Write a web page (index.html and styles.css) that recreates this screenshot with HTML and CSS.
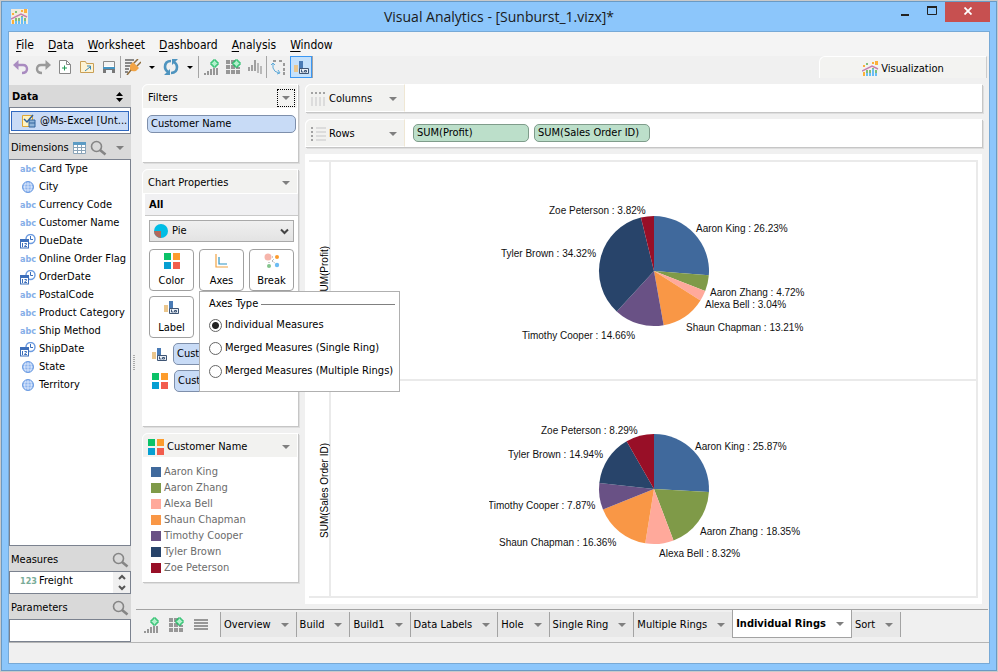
FILE: index.html
```html
<!DOCTYPE html>
<html lang="en">
  <head>
    <meta charset="utf-8">
    <title>Visual Analytics</title>
    <link rel="stylesheet" href="styles.css">
  </head>
  <body>
    <!-- shared icons -->
    <svg class="sprite" aria-hidden="true">
      <symbol id="caret" viewBox="0 0 8 4"><path d="M0 0h8L4 4z" fill="currentColor"/></symbol>
      <symbol id="viz" viewBox="0 0 17 15">
        <path d="M1 4h2v2H1zM10 1h2v2h-2zM13 0h3v4h-3zM1 11h2v4H1z" fill="#fbb03b"/>
        <path d="M4 2h2v2H4zM4 9h2v3H4zM7 9h2v3H7zM10 7h2v2h-2zM13 9h2v3h-2z" fill="#7fbf7b"/>
        <path d="M4 12h2v3H4zM7 12h2v3H7zM10 8h2v7h-2zM13 12h2v3h-2z" fill="#69bdf5"/>
        <path d="M0 10 10 5l6 3" fill="none" stroke="#c77fae" stroke-width="1.4"/>
      </symbol>
      <symbol id="palette" viewBox="0 0 16 16">
        <path d="M0 0h7v7H0z" fill="#0bc268"/><path d="M9 0h7v7H9z" fill="#fd9c2d"/>
        <path d="M0 9h7v7H0z" fill="#069fd2"/><path d="M9 9h7v7H9z" fill="#f25d4e"/>
      </symbol>
      <symbol id="label" viewBox="0 0 15 15">
        <path d="M0 5h4v7H0z" fill="#ebc68c"/><path d="M5 1h4v8H5z" fill="#4a7bb5"/>
        <path d="M5.5 8.5h9v5h-9z" fill="#e8eef6" stroke="#3e5574"/>
        <path d="M7.500 9.500v2.500h2M10.500 10.500h2v1.500h-2z" fill="none" stroke="#3e5574"/>
      </symbol>
      <symbol id="globe" viewBox="0 0 12 12">
        <circle cx="6" cy="6" r="5.500" fill="#8db4ee"/>
        <path d="M6 0v12M0 6h12M1 3h10M1 9h10M3.500 1q-2 5 0 10M8.500 1q2 5 0 10" fill="none" stroke="#e4eefc" stroke-width=".8"/>
        <circle cx="6" cy="6" r="5.500" fill="none" stroke="#6a9ae0"/>
      </symbol>
      <symbol id="date" viewBox="0 0 16 15">
        <circle cx="10.500" cy="5" r="4.500" fill="#fff" stroke="#6c9be0" stroke-width="1.400"/>
        <path d="M10.500 2v3.500h2.500" fill="none" stroke="#3a6db8"/>
        <path d="M0 5h9v9.500H0z" fill="#3d6fbb"/><path d="M1 8h7v5.500H1z" fill="#fff"/>
        <path d="M2.500 9v4M4.500 9.500h2v1l-2 1.500v.5h2.500" fill="none" stroke="#3d6fbb"/>
      </symbol>
      <symbol id="search" viewBox="0 0 17 16">
        <circle cx="6.500" cy="6.500" r="5" fill="none" stroke="#858585" stroke-width="1.600"/>
        <path d="M10 10l5.500 4.500" stroke="#858585" stroke-width="2.600"/>
      </symbol>
      <symbol id="addchart" viewBox="0 0 15 16">
        <path d="M0 14h2v2H0zM3 12h2v4H3zM6 10h2v6H6zM9 9h2v7H9zM12 9h2v7h-2z" fill="#979797"/>
        <path d="M9 1h3v2h2v3h-2v2H9V6H7V3h2z" fill="#b4f0cd" stroke="#13b85c"/>
      </symbol>
      <symbol id="addgrid" viewBox="0 0 15 16">
        <path d="M0 1h4v4H0zM5 1h4v4H5zM0 6h4v4H0zM5 6h4v4H5zM10 8h4v2h-4zM0 11h4v4H0zM5 11h4v4H5zM10 11h4v4h-4z" fill="#979797"/>
        <path d="M9 1h3v2h2v3h-2v2H9V6H7V3h2z" fill="#b4f0cd" stroke="#13b85c"/>
      </symbol>
    </svg>

    <div class="window">
      <header class="titlebar">
        <svg class="app-icon"><use href="#viz"/></svg>
        <h1>Visual Analytics - [Sunburst_1.vizx]*</h1>
        <div class="window-buttons">
          <button aria-label="Minimize"><svg width="10" height="12"><path d="M1 11h8" stroke="#222" stroke-width="2"/></svg></button>
          <button aria-label="Maximize"><svg width="10" height="12"><path d="M.5 3h9v7.500h-9z" fill="none" stroke="#222"/><path d="M0 3h10" stroke="#222" stroke-width="2"/></svg></button>
          <button class="close" aria-label="Close"><svg width="8" height="8"><path d="M.5.5l7 7m0-7l-7 7" stroke="#fff" stroke-width="1.800"/></svg></button>
        </div>
      </header>

      <div class="client">
        <nav class="menubar">
          <button><u>F</u>ile</button>
          <button><u>D</u>ata</button>
          <button><u>W</u>orksheet</button>
          <button><u>D</u>ashboard</button>
          <button><u>A</u>nalysis</button>
          <button><u>W</u>indow</button>
        </nav>

        <div class="toolbar">
          <button aria-label="Undo"><svg width="16" height="16"><path d="M3 6h7q4 0 4 4t-5 4" fill="none" stroke="#a98bc0" stroke-width="2.400"/><path d="M0 6l5.500-5v10z" fill="#a98bc0"/></svg></button>
          <button aria-label="Redo"><svg width="16" height="16"><path d="M13 6H6q-4 0-4 4t5 4" fill="none" stroke="#9a9a9a" stroke-width="2.400"/><path d="M16 6l-5.500-5v10z" fill="#9a9a9a"/></svg></button>
          <button aria-label="New"><svg width="14" height="16"><path d="M1.500 1.500h7l4 4v9h-11z" fill="#fff" stroke="#888"/><path d="M8.500 1.500v4h4" fill="none" stroke="#888"/><path d="M4 9h5M6.500 6.500v5" stroke="#219a55"/></svg></button>
          <button aria-label="Open"><svg width="16" height="16"><path d="M1.500 2.500h5l1 2h7v9h-13z" fill="#fdf3d4" stroke="#c9a057"/><path d="M6 12l5-4M8 7h3.500v3.500" fill="none" stroke="#3388bd"/></svg></button>
          <button aria-label="Save"><svg width="14" height="16"><path d="M1.500 2.500h11v11h-11z" fill="#fff" stroke="#8a8a8a"/><path d="M2 3h10v4H2z" fill="#f4f4f4"/><path d="M1 8h12v2H1z" fill="#4495c4"/><path d="M1 10h12v4H1z" fill="#787878"/><path d="M4 11h6v3H4z" fill="#eef2f5"/></svg></button>
          <span class="sep"></span>
          <button aria-label="Connect data"><svg width="16" height="16"><path d="M0 1h9M0 4h7M0 7h5M0 10h4M0 13h3" stroke="#888" stroke-width="2"/><path d="M5 6l3-3 6 6-3 3q-4 1-6-1z" fill="#f2a445"/><path d="M9 4l4-4M12 7l4-4M6 11l-4 5" stroke="#8d6c3d" stroke-width="1.500"/></svg></button>
          <button class="drop" aria-label="Connect options"><svg class="small-caret"><use href="#caret"/></svg></button>
          <button aria-label="Refresh"><svg width="16" height="16"><path d="M8 2Q2 2 2 8q0 3 3 5" fill="none" stroke="#4e94bf" stroke-width="2.600"/><path d="M8 14q6 0 6-6 0-3-3-5" fill="none" stroke="#4e94bf" stroke-width="2.600"/><path d="M7 10v6H1zM9 6V0h6z" fill="#4e94bf"/></svg></button>
          <button class="drop" aria-label="Refresh options"><svg class="small-caret"><use href="#caret"/></svg></button>
          <span class="sep"></span>
          <button aria-label="Add worksheet"><svg width="15" height="16"><use href="#addchart"/></svg></button>
          <button aria-label="Add dashboard"><svg width="15" height="16"><use href="#addgrid"/></svg></button>
          <button aria-label="Sort bars"><svg width="15" height="16"><path d="M0 8h2v4H0zM3 6h2v6H3zM6 1h2v11H6z" fill="#a0a0a0"/><path d="M9 4h2v10H9zM12 7h2v8h-2z" fill="#b9b9b9"/></svg></button>
          <span class="sep"></span>
          <button aria-label="Swap axes"><svg width="16" height="16"><path d="M2 1h3v2H2zM8 1h3v2H8zM12 4h2v3h-2zM12 9h2v3h-2zM12 13h2v3h-2z" fill="#9a9a9a"/><path d="M2 5v4q1 4 6 5" fill="none" stroke="#5da9d8"/><path d="M0 6l2-2 2 2M7 11l2 3-3 1" fill="none" stroke="#5da9d8"/></svg></button>
          <button class="active" aria-label="Show labels"><svg width="15" height="15"><use href="#label"/></svg></button>
          <span class="sep"></span>
          <button class="mode-tab"><svg width="17" height="15"><use href="#viz"/></svg>Visualization</button>
        </div>

        <div class="workspace">
          <aside class="sidebar">
            <h2 class="data-title">Data
              <svg width="7" height="10"><path d="M0 4l3.500-4L7 4zM0 6h7l-3.500 4z"/></svg>
            </h2>
            <div class="source">
              <svg width="14" height="14"><path d="M.5 1.500h10v11H.5z" fill="#fff3c0" stroke="#dfa735"/><path d="M2 5l3 3 6-7" fill="none" stroke="#30609a" stroke-width="1.500"/><path d="M7 6h6v7H7z" fill="#8fb4d9" stroke="#33659c"/><path d="M7 9h6" stroke="#33659c"/></svg>
              <select aria-label="Data source"><option>@Ms-Excel [Unt...</option></select>
            </div>
            <h2>Dimensions
              <svg width="13" height="12"><path d="M.5.5h12v11H.5zM.5 5.500h12M.5 8.500h12M4.500 2v10M8.500 2v10" fill="#fff" stroke="#8aa4b8"/><path d="M0 0h13v3H0z" fill="#5c9bc4"/></svg>
              <svg width="17" height="16"><use href="#search"/></svg>
              <svg class="caret"><use href="#caret"/></svg>
            </h2>
            <ul class="fields dimensions">
              <li><i>abc</i>Card Type</li>
              <li><svg width="12" height="12"><use href="#globe"/></svg>City</li>
              <li><i>abc</i>Currency Code</li>
              <li><i>abc</i>Customer Name</li>
              <li><svg width="16" height="15"><use href="#date"/></svg>DueDate</li>
              <li><i>abc</i>Online Order Flag</li>
              <li><svg width="16" height="15"><use href="#date"/></svg>OrderDate</li>
              <li><i>abc</i>PostalCode</li>
              <li><i>abc</i>Product Category</li>
              <li><i>abc</i>Ship Method</li>
              <li><svg width="16" height="15"><use href="#date"/></svg>ShipDate</li>
              <li><svg width="12" height="12"><use href="#globe"/></svg>State</li>
              <li><svg width="12" height="12"><use href="#globe"/></svg>Territory</li>
            </ul>
            <h2>Measures <svg class="last" width="17" height="16"><use href="#search"/></svg></h2>
            <div class="measures">
              <ul class="fields">
                <li><i class="number">123</i>Freight</li>
              </ul>
              <div class="scroll">
                <button aria-label="Scroll up"><svg width="8" height="6"><path d="M1 5l3-3 3 3" fill="none" stroke="#555" stroke-width="2"/></svg></button>
                <button aria-label="Scroll down"><svg width="8" height="6"><path d="M1 1l3 3 3-3" fill="none" stroke="#555" stroke-width="2"/></svg></button>
              </div>
            </div>
            <h2>Parameters <svg class="last" width="17" height="16"><use href="#search"/></svg></h2>
            <div class="parameters"></div>
          </aside>
          <div class="splitter"></div>

          <main>
            <div class="content">
              <div class="shelves">
                <section class="card filters">
                  <header>Filters <button class="focused" aria-label="Filter options"><svg class="caret"><use href="#caret"/></svg></button></header>
                  <div class="card-body"><button class="pill">Customer Name</button></div>
                </section>

                <section class="card properties">
                  <header>Chart Properties <button aria-label="Chart options"><svg class="caret"><use href="#caret"/></svg></button></header>
                  <h3>All</h3>
                  <div class="props">
                    <div class="chart-type">
                      <svg class="type-icon" width="14" height="14"><circle cx="7" cy="7" r="7" fill="#00bde5"/><path d="M7 7v7a7 7 0 0 1-7-7z" fill="#b1695c"/></svg>
                      <select aria-label="Chart type"><option>Pie</option></select>
                      <svg class="chevron" width="9" height="7"><path d="M1 1.500l3.500 3.500L8 1.500" fill="none" stroke="#444" stroke-width="2"/></svg>
                    </div>
                    <div class="tiles">
                      <button><svg width="16" height="16"><use href="#palette"/></svg>Color</button>
                      <button><svg width="16" height="16"><path d="M2 1v13h12" fill="none" stroke="#f0a345" stroke-width="1.200"/><path d="M5 4v7h8" fill="none" stroke="#2d93c4" stroke-width="1.200"/></svg>Axes</button>
                      <button><svg width="16" height="16"><circle cx="4" cy="4" r="3.500" fill="#f6b5ab"/><circle cx="13" cy="4" r="2" fill="#fb9b2d"/><circle cx="5" cy="13" r="2" fill="#83c48c"/><circle cx="13" cy="12" r="2.200" fill="#6dbcf3"/><path d="M8 4h2M5 9v1M8 8l3 2M8 8l2-2" stroke="#999" stroke-dasharray="1 1"/></svg>Break</button>
                      <button><svg width="15" height="15"><use href="#label"/></svg>Label</button>
                    </div>
                    <div class="binding"><svg width="15" height="15"><use href="#label"/></svg><button class="pill">Cust</button></div>
                    <div class="binding"><svg width="16" height="16"><use href="#palette"/></svg><button class="pill">Cust</button></div>

                    <fieldset class="axes-popup">
                      <legend>Axes Type</legend>
                      <label><input type="radio" name="axes" checked>Individual Measures</label>
                      <label><input type="radio" name="axes">Merged Measures (Single Ring)</label>
                      <label><input type="radio" name="axes">Merged Measures (Multiple Rings)</label>
                    </fieldset>
                  </div>
                </section>

                <section class="card">
                  <header><svg width="16" height="16"><use href="#palette"/></svg>Customer Name <button aria-label="Legend options"><svg class="caret"><use href="#caret"/></svg></button></header>
                  <ul class="legend">
                    <li class="king">Aaron King</li>
                    <li class="zhang">Aaron Zhang</li>
                    <li class="bell">Alexa Bell</li>
                    <li class="chapman">Shaun Chapman</li>
                    <li class="cooper">Timothy Cooper</li>
                    <li class="brown">Tyler Brown</li>
                    <li class="peterson">Zoe Peterson</li>
                  </ul>
                </section>
              </div>

              <div class="view">
                <div class="shelf">
                  <button class="shelf-name"><svg width="15" height="15"><path d="M0 1h15" stroke="#a3a3a3" stroke-width="2" stroke-dasharray="2 2"/><path d="M1 5v9M5 5v9M9 5v9M13 5v9" stroke="#dcdcdc" stroke-width="2"/></svg>Columns<svg class="caret"><use href="#caret"/></svg></button>
                </div>
                <div class="shelf">
                  <button class="shelf-name"><svg width="15" height="15"><path d="M1 0v15" stroke="#a3a3a3" stroke-width="2" stroke-dasharray="2 2"/><path d="M5 1h10M5 5h10M5 9h10M5 13h10" stroke="#dcdcdc" stroke-width="2"/></svg>Rows<svg class="caret"><use href="#caret"/></svg></button>
                  <button class="pill measure">SUM(Profit)</button>
                  <button class="pill measure">SUM(Sales Order ID)</button>
                </div>
                <div class="sheet">
                  <div class="plots">
                    <div class="axis"><span>SUM(Profit)</span></div>
                    <div class="plot"><svg id="profit" viewBox="0 0 330 160" width="330" height="160"></svg></div>
                    <div class="axis"><span>SUM(Sales Order ID)</span></div>
                    <div class="plot"><svg id="orders" viewBox="0 0 330 160" width="330" height="160"></svg></div>
                  </div>
                </div>
              </div>
            </div>

            <nav class="tabs">
              <div class="tab-tools">
                <button aria-label="New worksheet"><svg width="15" height="16"><use href="#addchart"/></svg></button>
                <button aria-label="New dashboard"><svg width="15" height="16"><use href="#addgrid"/></svg></button>
                <button aria-label="List sheets"><svg width="14" height="12"><path d="M0 1h14M0 4h14M0 7h14M0 10h14" stroke="#979797" stroke-width="2"/></svg></button>
              </div>
              <button class="tab">Overview<svg class="caret"><use href="#caret"/></svg></button>
              <button class="tab">Build<svg class="caret"><use href="#caret"/></svg></button>
              <button class="tab">Build1<svg class="caret"><use href="#caret"/></svg></button>
              <button class="tab">Data Labels<svg class="caret"><use href="#caret"/></svg></button>
              <button class="tab">Hole<svg class="caret"><use href="#caret"/></svg></button>
              <button class="tab">Single Ring<svg class="caret"><use href="#caret"/></svg></button>
              <button class="tab">Multiple Rings<svg class="caret"><use href="#caret"/></svg></button>
              <button class="tab selected">Individual Rings<svg class="caret"><use href="#caret"/></svg></button>
              <button class="tab last-tab">Sort<svg class="caret"><use href="#caret"/></svg></button>
            </nav>
          </main>
        </div>
        <footer class="status"></footer>
      </div>
    </div>
    <script src="charts.js"></script>
  </body>
</html>
```
FILE: styles.css
```css
* { box-sizing: border-box; }
html { height: 100%; background: #c9c9c9; }
body { margin: 0; padding: 1px; height: 100%; font: 11px/14px "DejaVu Sans Condensed", "DejaVu Sans", sans-serif; color: #000; }
h1, h2, h3, ul { margin: 0; padding: 0; font: inherit; list-style: none; }
button, select { margin: 0; padding: 0; border: 0; background: none; font: inherit; color: inherit; white-space: nowrap; }
svg { flex: none; }
.sprite { position: absolute; width: 0; height: 0; }
.caret { width: 8px; height: 4px; color: #7f7f7f; }
.small-caret { width: 6px; height: 3px; color: #000; }

/* window frame */
.window { height: 100%; display: flex; flex-direction: column; border: 1px solid #6a9ac4; background: #8cc6fb; padding: 0 6px 6px; }
.titlebar { display: grid; grid-template-columns: 1fr auto 1fr; height: 29px; flex: none; }
.app-icon { width: 17px; height: 15px; margin: 7px 3px; background: #f3ecdd; }
.titlebar h1 { font: 14px/29px "Open Sans", sans-serif; color: #1a1a1a; }
.window-buttons { display: flex; justify-content: flex-end; align-items: flex-start; }
.window-buttons button { width: 27px; height: 20px; }
.window-buttons .close { width: 45px; background: #c75050; }
.client { flex: 1; min-height: 0; display: flex; flex-direction: column; border: 1px solid #77a9d6; background: #f0f0f0; }

.menubar { display: flex; gap: 14px; padding: 2px 7px 0; height: 24px; flex: none; background: #f4f4f4; font-size: 12px; }
.menubar u { text-underline-offset: 2px; }
.toolbar { display: flex; height: 28px; flex: none; padding-left: 1px; }
.toolbar button { display: flex; align-items: center; justify-content: center; width: 22px; height: 22px; }
.toolbar .drop { width: 16px; }
.toolbar .active { border: 1px solid #3b97f3; background: #c5e1fb; }
.sep { width: 1px; height: 22px; margin-right: 1px; background: #a5a5a5; }
.toolbar .mode-tab { width: 168px; margin-left: auto; margin-right: 2px; padding-top: 2px; gap: 2px; background: #f3f3f1; border: 1px solid #fff; border-right: 1px solid #ccc; border-bottom: 0; border-radius: 6px 0 0 0; }
.workspace { flex: 1; min-height: 0; display: flex; }
.status { height: 21px; flex: none; border-top: 1px solid #b5b5b5; }

/* data sidebar */
.sidebar { width: 122px; flex: none; display: flex; flex-direction: column; padding-top: 1px; }
.sidebar h2 { display: flex; align-items: center; gap: 4px; height: 25px; flex: none; padding: 2px 2px 0; background: #d9d9d9; }
.sidebar h2 .caret { margin: 0 5px 0 auto; }
.sidebar .data-title { height: 22px; padding: 1px 8px 0 3px; justify-content: space-between; font-weight: bold; }
.sidebar .last { margin-left: auto; }
.source { display: flex; align-items: center; height: 27px; flex: none; position: relative; border: 1px solid #7b828f; background: #fff; padding: 1px; }
.source svg { position: absolute; left: 12px; }
.source select { appearance: none; width: 100%; height: 20px; padding: 0 0 0 28px; border: 1px solid #2f68c0; background: #c9dbf6; }
.fields li { display: flex; align-items: center; height: 18px; padding-left: 10px; white-space: nowrap; }
.fields i { width: 19px; font: 600 9px/14px "DejaVu Sans Condensed", sans-serif; color: #85aee8; }
.fields .number { color: #79ac98; }
.fields svg { margin-right: 3px; }
.fields svg[width="12"] { margin-left: 2px; margin-right: 5px; }
.dimensions, .measures, .parameters { border: 1px solid #7b828f; background: #fff; }
.dimensions { flex: 1; overflow: hidden; }
.measures { display: flex; justify-content: space-between; height: 23px; flex: none; overflow: hidden; }
.scroll { display: flex; flex-direction: column; width: 17px; background: #f0f0f0; }
.scroll button { flex: 1; line-height: 8px; }
.parameters { height: 23px; flex: none; }
.splitter { width: 5px; height: 16px; flex: none; align-self: center; border: 0 solid #f0f0f0; border-width: 0 1px 0 2px; background: repeating-linear-gradient(#aaa 0 1px, #f0f0f0 1px 2px); }

main { flex: 1; min-width: 0; display: flex; flex-direction: column; }
.content { flex: 1; min-height: 0; display: flex; gap: 7px; padding: 0 7px 5px 6px; }

/* cards */
.shelves { width: 156px; flex: none; display: flex; flex-direction: column; gap: 7px; }
.card, .shelf { background: #fff; border-radius: 6px 0 0 0; box-shadow: 1px 1px 0 #c6c6c6, 2px 2px 0 #dedede; }
.card header { display: flex; align-items: center; gap: 3px; height: 25px; padding: 2px 1px 0 5px; background: #f2f2f0; border: 1px solid #fff; border-radius: 6px 0 0 0; }
.card header button { width: 18px; height: 18px; margin: 0 1px 0 auto; display: flex; align-items: center; justify-content: center; }
.card header .focused { border: 1px dotted #000; }
.card-body { padding: 6px 2px 29px 5px; }
.pill { display: block; width: 100%; height: 18px; padding: 0 3px; text-align: left; border: 1px solid #7e8fab; border-radius: 5px; background: #c8dbf6; }
.card h3 { margin-left: 3px; padding: 4px 4px 3px; border-bottom: 1px solid #c9c9c9; background: #f0f0f2; font-weight: bold; }
.props { position: relative; display: flex; flex-direction: column; padding: 4px 4px 29px 7px; }
.chart-type { display: flex; align-items: center; position: relative; }
.chart-type select { appearance: none; width: 100%; height: 22px; padding-left: 22px; border: 1px solid #a9a9a9; background: linear-gradient(#f0f0f0, #e3e3e3); }
.type-icon { position: absolute; left: 5px; }
.chevron { position: absolute; right: 5px; }
.tiles { display: grid; grid-template-columns: repeat(3, 1fr); gap: 5px; margin: 7px 0 5px; }
.tiles button { display: flex; flex-direction: column; align-items: center; justify-content: space-between; height: 42px; padding: 3px 0 2px; border: 1px solid #a0a0a0; border-radius: 4px; background: #fff; }
.binding { display: flex; align-items: center; gap: 6px; padding-left: 3px; margin-bottom: 5px; }
.binding .pill { flex: 1; height: 22px; }
.axes-popup { position: absolute; z-index: 2; top: 75px; left: 57px; width: 201px; margin: 0; padding: 5px 4px 11px 9px; border: 1px solid #b0b0b0; background: #fff; display: flex; flex-direction: column; gap: 5px; }
.axes-popup legend { float: left; width: 100%; display: flex; align-items: center; gap: 3px; padding: 0; }
.axes-popup legend::after { content: ""; flex: 1; border-top: 1px solid #808080; }
.axes-popup label { display: flex; align-items: center; gap: 3px; height: 18px; white-space: nowrap; }
.axes-popup input { appearance: none; width: 13px; height: 13px; margin: 0; flex: none; border: 1px solid #666; border-radius: 50%; }
.axes-popup input:checked { background: radial-gradient(#222 3px, #fff 4px); }
.legend { padding: 6px 9px; color: #6b6b6b; }
.legend li { display: flex; align-items: center; gap: 3px; height: 16px; }
.legend li::before { content: ""; width: 10px; height: 10px; background: currentColor; }
.legend .king::before { background: #40699c; }
.legend .zhang::before { background: #7f9a48; }
.legend .bell::before { background: #ffa99b; }
.legend .chapman::before { background: #f99746; }
.legend .cooper::before { background: #695185; }
.legend .brown::before { background: #28446a; }
.legend .peterson::before { background: #980f27; }

/* shelves and sheet */
.view { flex: 1; min-width: 0; display: flex; flex-direction: column; gap: 7px; }
.shelf { display: flex; align-items: center; gap: 5px; height: 28px; flex: none; }
.shelf-name { display: flex; align-items: center; gap: 3px; align-self: stretch; width: 100px; padding: 2px 7px 0 5px; margin-right: 3px; border-radius: 6px 0 0 0; border: 1px solid #fff; border-right-color: #efe7d4; background: #f2f2f0; }
.shelf-name .caret { margin-left: auto; }
.measure { width: 116px; border-color: #7f9c8b; background: #bcdfca; }
.sheet { flex: 1; display: flex; padding: 6px 4px 6px; background: #fff; }
.plots { flex: 1; display: grid; grid-template: 1fr 1fr / 22px 1fr; border: 2px solid #eaeaea; border-left: 0; font: 10px/12px "Liberation Sans", Arial, sans-serif; }
.axis { display: flex; align-items: center; justify-content: flex-end; padding-top: 4px; border-right: 2px solid #eaeaea; line-height: 9px; }
.axis span { writing-mode: vertical-rl; transform: rotate(180deg); white-space: nowrap; }
.plot { display: flex; align-items: center; justify-content: center; }
.plot + .axis, .plot + .axis + .plot { border-top: 2px solid #eaeaea; }
.plot text { fill: #111; }

/* sheet tabs */
.tabs { display: flex; height: 33px; flex: none; margin-right: 1px; border-top: 1px solid #a3a3a3; }
.tab-tools { display: flex; align-items: center; gap: 10px; width: 84px; height: 30px; padding-left: 8px; }
.tab-tools button { line-height: 0; }
.tab { display: flex; align-items: center; gap: 10px; height: 25px; margin-top: 2px; padding: 0 7px 0 3px; border-left: 1px solid #a3a3a3; background: #e8e8e8; }
.selected { height: 28px; margin-top: 0; border: 1px solid #a3a3a3; border-top: 0; background: #fff; font-weight: bold; }
.selected + .tab { border-left: 0; }
.last-tab { border-right: 1px solid #a3a3a3; }
```
FILE: charts.js
```js
const colors = ['#40699c', '#7f9a48', '#ffa99b', '#f99746', '#695185', '#28446a', '#980f27'];
const names = ['Aaron King', 'Aaron Zhang', 'Alexa Bell', 'Shaun Chapman', 'Timothy Cooper', 'Tyler Brown', 'Zoe Peterson'];

// label positions are offsets from the centre of the pie
const profit = {
  values: [26.23, 4.72, 3.04, 13.21, 14.66, 34.32, 3.82],
  labels: [[42, -39], [56, 25], [51, 37], [32, 60], [-132, 68], [-153, -14], [-105, -57]]
};
const orders = {
  values: [25.87, 18.35, 8.32, 16.36, 7.87, 14.94, 8.29],
  labels: [[41, -39], [46, 46], [5, 68], [-155, 57], [-166, 20], [-146, -31], [-113, -55]]
};

function pie(id, data) {
  const r = 55;
  const point = share => {
    const a = share / 100 * 2 * Math.PI;
    return `${r * Math.sin(a)} ${-r * Math.cos(a)}`;
  };
  let start = 0;
  let slices = '';
  let texts = '';
  data.values.forEach((value, i) => {
    slices += `<path fill="${colors[i]}" d="M0 0L${point(start)}A${r} ${r} 0 0 1 ${point(start + value)}z"/>`;
    texts += `<text x="${data.labels[i][0]}" y="${data.labels[i][1]}">${names[i]} : ${value.toFixed(2)}%</text>`;
    start += value;
  });
  document.getElementById(id).innerHTML = `<g transform="translate(165 80)">${slices}${texts}</g>`;
}

pie('profit', profit);
pie('orders', orders);
```
